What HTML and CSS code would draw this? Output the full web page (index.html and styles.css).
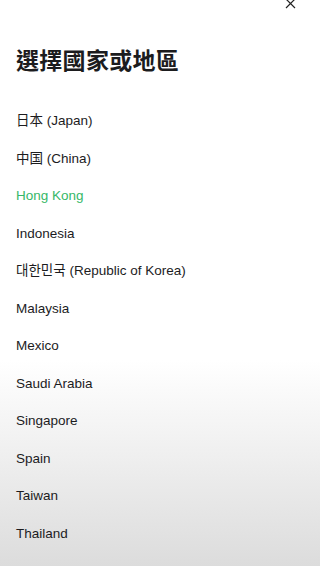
FILE: index.html
```html
<!DOCTYPE html>
<html lang="zh-Hant">
<head>
    <meta charset="UTF-8">
    <meta name="viewport" content="width=device-width, initial-scale=1.0">
    <title>選擇國家或地區</title>
    <link rel="stylesheet" href="styles.css">
</head>
<body>
    <div class="top-bar">
        <button class="close-btn" aria-label="Close">
            <svg width="11" height="11" viewBox="0 0 11 11">
                <path d="M1 1 L10 10 M10 1 L1 10" stroke="#222" stroke-width="1.2" fill="none"/>
            </svg>
        </button>
    </div>

    <h1 class="page-title">選擇國家或地區</h1>

    <ul class="country-list">
        <li class="country-item">日本 (Japan)</li>
        <li class="country-item">中国 (China)</li>
        <li class="country-item active">Hong Kong</li>
        <li class="country-item">Indonesia</li>
        <li class="country-item">대한민국 (Republic of Korea)</li>
        <li class="country-item">Malaysia</li>
        <li class="country-item">Mexico</li>
        <li class="country-item">Saudi Arabia</li>
        <li class="country-item">Singapore</li>
        <li class="country-item">Spain</li>
        <li class="country-item">Taiwan</li>
        <li class="country-item">Thailand</li>
    </ul>
</body>
</html>
```

FILE: styles.css
```css
* {
    margin: 0;
    padding: 0;
    box-sizing: border-box;
}

html, body {
    height: 100%;
}

body {
    font-family: "Liberation Sans", "Noto Sans CJK TC", sans-serif;
    color: #1c1c1e;
    background: linear-gradient(to bottom, #fff 0, #fff 360px, #f0f0f0 450px, #dcdcdc 566px);
    overflow: hidden;
}

.top-bar {
    display: flex;
    justify-content: flex-end;
    height: 12px;
    padding-right: 24px;
}

.close-btn {
    background: none;
    border: none;
    margin-top: -2px;
    height: 11px;
    cursor: pointer;
}

.close-btn svg {
    display: block;
}

.page-title {
    font-family: "Noto Sans CJK TC", sans-serif;
    font-size: 23px;
    font-weight: 600;
    line-height: 30px;
    margin: 32px 0 0 16px;
    letter-spacing: 0.3px;
}

.country-list {
    list-style: none;
    margin-top: 28px;
}

.country-item {
    font-size: 13.5px;
    line-height: 37.5px;
    padding-left: 16px;
    cursor: pointer;
}

.country-item.active {
    color: #36b868;
}
```
